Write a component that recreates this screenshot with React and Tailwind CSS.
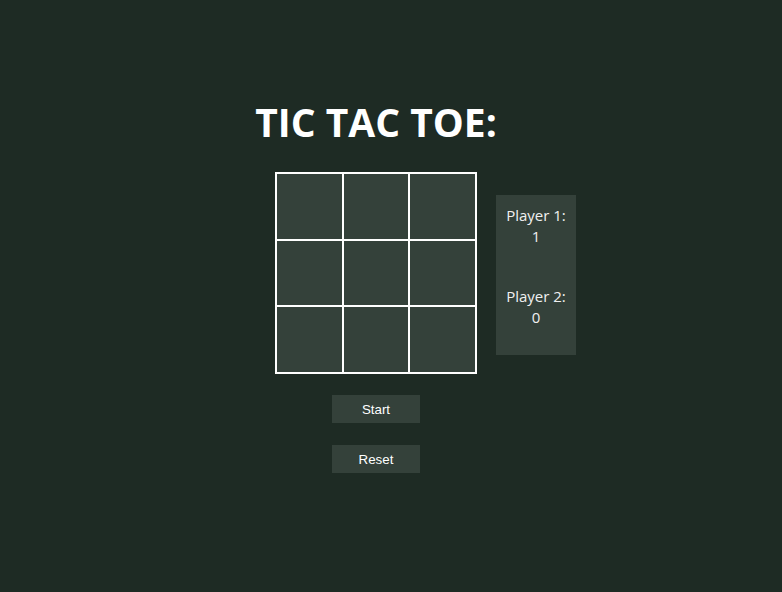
import React, { useState } from "react";

const App = () => {
    const [cells] = useState(Array(9).fill(""));
    const [scores] = useState({ p1: 1, p2: 0 });

    return (
        <div
            className="min-h-[592px] w-full bg-[#1e2b24] flex flex-col items-center pr-[30px] text-white"
            style={{ fontFamily: '"Segoe UI", "Open Sans", sans-serif' }}
        >
            {/* Title */}
            <h1 className="mt-[97px] text-[39px] leading-[50px] font-bold">TIC TAC TOE:</h1>

            {/* Board + scores */}
            <div className="mt-[25px] grid grid-cols-[1fr_auto_1fr] w-full">
                <div />
                <div className="grid grid-cols-3 gap-[2px] bg-white p-[2px] w-[202px] h-[202px]">
                    {cells.map((c, i) => (
                        <button key={i} className="bg-[#34413a]">
                            {c}
                        </button>
                    ))}
                </div>
                <div>
                    <div className="ml-[19px] mt-[23px] w-[80px] h-[160px] bg-[#34413a] pt-[10px] text-center text-[15px] leading-[21px] text-[#f0f0f0]">
                        <div>
                            Player 1:
                            <br />
                            {scores.p1}
                        </div>
                        <div className="mt-[39px]">
                            Player 2:
                            <br />
                            {scores.p2}
                        </div>
                    </div>
                </div>
            </div>

            {/* Controls */}
            <div
                className="mt-[21px] flex flex-col items-center gap-[22px] text-[13.33px]"
                style={{ fontFamily: '"Liberation Sans", Arial, sans-serif' }}
            >
                <button className="w-[88px] h-[28px] bg-[#34413a] text-white pt-[1px]">Start</button>
                <button className="w-[88px] h-[28px] bg-[#34413a] text-white pt-[1px]">Reset</button>
            </div>
        </div>
    );
};

export default App;
